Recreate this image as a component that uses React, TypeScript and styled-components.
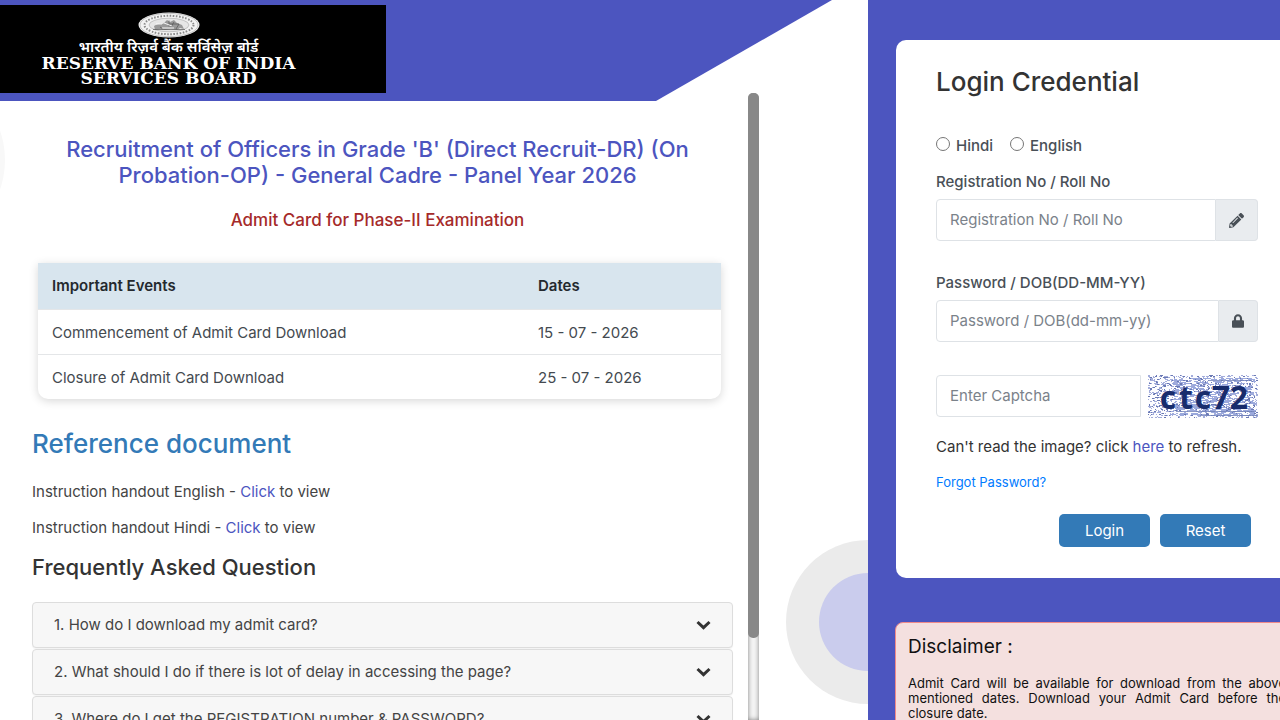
import React from "react";
import styled, { createGlobalStyle } from "styled-components";
import { FaLock, FaPencilAlt } from "react-icons/fa";

const GlobalStyle = createGlobalStyle`
  *, *::before, *::after { box-sizing: border-box; }
  body {
    margin: 0;
    background: #fff;
    color: #333;
    font-family: Inter, "Liberation Sans", sans-serif;
    font-size: 15px;
    line-height: 24px;
  }
  h1, h2, h3, p { margin: 0; font-weight: 500; }
  p { font-weight: 400; }
  a { text-decoration: none; }
`;

const brand = "#4c55bf";

const Page = styled.div`
  display: flex;
  height: 100vh;
  overflow: hidden;
`;

const InfoPanel = styled.main`
  position: relative;
  flex: 1;
  min-width: 0;
  display: flex;
  flex-direction: column;
  padding-top: 5px;
  overflow: hidden;
`;

const HeaderShape = styled.div`
  position: absolute;
  inset: 0 0 auto 0;
  height: 101px;
  background: ${brand};
  clip-path: polygon(0 0, 832px 0, 656px 100%, 0 100%);
`;

const Circle = styled.div<{ $size: number; $color: string }>`
  position: absolute;
  width: ${(p) => p.$size}px;
  height: ${(p) => p.$size}px;
  border-radius: 50%;
  background: ${(p) => p.$color};
`;

const LeftCircle = styled(Circle)`
  top: 70px;
  left: -175px;
`;

const RingCircle = styled(Circle)`
  top: 540px;
  right: -82px;
  display: grid;
  place-items: center;
`;

const InnerCircle = styled(Circle)`
  position: static;
`;

const Logo = styled.header`
  position: relative;
  width: 386px;
  height: 88px;
  flex: none;
  padding: 7px 49px 0 0;
  background: #000;
  color: #fff;
  display: flex;
  flex-direction: column;
  align-items: center;
  white-space: nowrap;
`;

const LogoHindi = styled.div`
  margin: 1px 0 -3px;
  font: 600 15px/20px "Noto Sans Devanagari", "Noto Sans", sans-serif;
`;

const LogoEnglish = styled.div`
  font: 700 17px/15px "DejaVu Serif", "Liberation Serif", serif;
  text-align: center;
`;

const ScrollArea = styled.div`
  position: relative;
  flex: 1;
  min-height: 0;
  width: 759px;
  max-width: 100%;
  display: flex;
`;

const ScrollContent = styled.div`
  flex: 1;
  min-width: 0;
  padding: 43px 15px 0 32px;
  overflow: hidden;
`;

const ScrollTrack = styled.div`
  width: 11px;
  background: #f5f5f5;
  box-shadow: inset 0 0 5px #808080;
  border-radius: 5px 5px 0 0;
`;

const ScrollThumb = styled.div`
  height: 87%;
  background: #888;
  border-radius: 5px;
`;

const Title = styled.h1`
  padding: 0 30px 0 20px;
  font-size: 22px;
  line-height: 26px;
  color: ${brand};
  text-align: center;
`;

const Subtitle = styled.h2`
  margin-top: 20px;
  padding-right: 10px;
  font-size: 17px;
  line-height: 24px;
  color: #a52a2a;
  text-align: center;
`;

const TableCard = styled.div`
  margin: 31px 12px 0 6px;
  border-radius: 0 0 10px 10px;
  box-shadow: 0 2px 10px rgba(0, 0, 0, 0.16);
  overflow: hidden;
`;

const Table = styled.table`
  width: 100%;
  table-layout: fixed;
  border-collapse: collapse;
  text-align: left;
  color: #444a50;
  thead { background: #d8e5ee; color: #24292e; }
  th { font-weight: 600; height: 46px; padding: 0 14px; }
  th:first-child { width: 486px; }
  td { height: 45px; padding: 2px 14px 0; border-top: 1px solid #e4e6e8; }
`;

const DocHeading = styled.h2`
  margin-top: 29px;
  font-size: 26px;
  line-height: 32px;
  color: #337ab7;
`;

const Handout = styled.p`
  margin-top: 12px;
  color: #444;
  ${DocHeading} + & { margin-top: 20px; }
`;

const BrandLink = styled.a`
  color: ${brand};
`;

const FaqHeading = styled.h2`
  margin: 13px 0 21px;
  font-size: 22px;
  line-height: 28px;
`;

const FaqItem = styled.button`
  display: flex;
  align-items: center;
  justify-content: space-between;
  width: 100%;
  height: 46px;
  margin-bottom: 1px;
  padding: 0 21px;
  border: 1px solid #ddd;
  border-radius: 4px;
  background: #f7f7f7;
  color: #444;
  font: inherit;
  text-align: left;
  box-shadow: 0 1px 1px rgba(0, 0, 0, 0.05);
`;

const LoginPanel = styled.aside`
  flex: none;
  width: 412px;
  padding: 40px 0 0 28px;
  background: ${brand};
  overflow: hidden;
`;

const LoginCard = styled.form`
  width: 402px;
  padding: 26px 40px 31px;
  border-radius: 10px;
  background: #fff;
`;

const LoginHeading = styled.h2`
  font-size: 26px;
  line-height: 32px;
`;

const RadioRow = styled.div`
  display: flex;
  gap: 17px;
  margin-top: 36px;
`;

const RadioLabel = styled.label`
  display: flex;
  gap: 6px;
  color: #495057;
  font-weight: 500;
  input { width: 14px; height: 14px; margin: 3px 0 0; }
`;

const Field = styled.div`
  margin-bottom: 30px;
`;

const Label = styled.label`
  display: block;
  margin: 12px 0 5px;
  color: #495057;
  font-weight: 500;
`;

const InputGroup = styled.div`
  display: flex;
  height: 42px;
`;

const TextInput = styled.input`
  flex: 1;
  min-width: 0;
  height: 42px;
  padding: 0 13px 2px;
  border: 1px solid #dee2e6;
  border-radius: 4px 0 0 4px;
  background: #fff;
  color: #495057;
  font: inherit;
  &::placeholder { color: #7b828a; opacity: 1; }
`;

const Addon = styled.span`
  display: flex;
  align-items: center;
  padding: 0 13px;
  border: 1px solid #dee2e6;
  border-left: 0;
  border-radius: 0 4px 4px 0;
  background: #e9ecef;
  color: #495057;
`;

const LockIcon = styled(FaLock)`
  width: 12px;
  height: 14px;
`;

const CaptchaRow = styled.div`
  display: flex;
  gap: 7px;
  height: 42px;
  margin: 33px 0 18px;
`;

const CaptchaImage = styled.svg`
  flex: none;
  width: 110px;
  height: 43px;
`;

const ForgotLink = styled.a`
  display: block;
  margin: 11px 0 20px;
  font-size: 13px;
  color: #007bff;
`;

const Buttons = styled.div`
  display: flex;
  justify-content: flex-end;
  gap: 10px;
  padding-right: 7px;
`;

const ActionButton = styled.button`
  width: 91px;
  height: 33px;
  border: 0;
  border-radius: 5px;
  background: #337ab7;
  color: #fff;
  font: inherit;
`;

const Disclaimer = styled.section`
  width: 404px;
  margin: 44px 0 0 -1px;
  padding: 10px 12px 24px;
  border: 1px solid #f08a8a;
  border-radius: 8px;
  background: #f4e0df;
  color: #111;
`;

const DisclaimerHeading = styled.h3`
  font-size: 19px;
  line-height: 28px;
  font-weight: 400;
`;

const DisclaimerText = styled.p`
  margin-top: 15px;
  font-size: 13px;
  line-height: 15px;
  text-align: justify;
`;

const Chevron = () => (
  <svg width="15" height="10" viewBox="0 0 15 10" aria-hidden="true">
    <path d="M1.500 2 L7.500 7.600 L13.500 2" fill="none" stroke="#333" strokeWidth="3" />
  </svg>
);

const Emblem = () => (
  <svg width="62" height="26" viewBox="0 0 62 26" aria-hidden="true">
    <ellipse cx="31" cy="13" rx="30.5" ry="12.5" fill="#f2f2f2" />
    <ellipse cx="31" cy="13" rx="29" ry="11.6" fill="none" stroke="#999" strokeWidth=".5" />
    <ellipse cx="31" cy="13" rx="24.5" ry="9.2" fill="none" stroke="#8a8a8a" strokeWidth="2" strokeDasharray="1.6 1.5" />
    <ellipse cx="31" cy="13" rx="20" ry="6.8" fill="#e6e6e6" stroke="#999" strokeWidth=".5" />
    <path d="M16 14 q4-3 9-2 l4-4 3 2 4-2 3 3 5 2 2 4 -4-1 -3 2 -6-1 -6 1 -5-1 -5 1z" fill="#999" />
    <path d="M15 17.500 h32 M22 15 l3 2 M31 8.500 v6 M36 10 l-3 5 M41 12 l-3 5 M31 12 h10" stroke="#555" strokeWidth=".7" fill="none" />
    <path d="M26 11 l8 3 M18 12 h6 M24 16 h12" stroke="#fff" strokeWidth=".9" />
  </svg>
);

// Deterministic speckle so the captcha background stays the same between renders.
function speckle(seed: number, count: number, wide: boolean): string {
  let s = seed;
  const next = () => {
    s = (s * 1103515245 + 12345) % 2147483648;
    return s / 2147483648;
  };
  let d = "";
  for (let i = 0; i < count; i++) {
    const x = wide ? 22 + Math.floor(next() * 82) : Math.floor(next() * 109);
    const y = wide ? 3 + Math.floor(next() * 38) : Math.floor(next() * 43);
    const w = wide ? 2 + Math.floor(next() * 5) : 1 + Math.floor(next() * 2);
    d += `M${x} ${y}h${w}v1h-${w}z`;
  }
  return d;
}

const captchaGlyphs: [string, number][] = [
  ["c", 20],
  ["t", 38],
  ["c", 55],
  ["7", 73],
  ["2", 91],
];

const Captcha = () => (
  <CaptchaImage viewBox="0 0 110 43" role="img" aria-label="Captcha">
    <rect width="110" height="43" fill="#fdfdff" />
    <path d={speckle(7, 1000, false)} fill="#a3addb" />
    <path d={speckle(91, 380, true)} fill="#9aa8dc" />
    <path d={speckle(23, 330, false)} fill="#6a79b4" />
    <path d="M28 36.500 H108 M52 40.500 H110 M60 5.500 H104" stroke="#7080b8" strokeWidth=".8" />
    {captchaGlyphs.map(([glyph, x]) => (
      <text
        key={x}
        x={x}
        y="34"
        textAnchor="middle"
        fontFamily="Open Sans, sans-serif"
        fontWeight="700"
        fontSize="32"
        fill="#182c6c"
      >
        {glyph}
      </text>
    ))}
  </CaptchaImage>
);

const events = [
  ["Commencement of Admit Card Download", "15 - 07 - 2026"],
  ["Closure of Admit Card Download", "25 - 07 - 2026"],
];

const questions = [
  "1. How do I download my admit card?",
  "2. What should I do if there is lot of delay in accessing the page?",
  "3. Where do I get the REGISTRATION number & PASSWORD?",
];

export default function App() {
  return (
    <Page>
      <GlobalStyle />
      <InfoPanel>
        <HeaderShape />
        <LeftCircle $size={180} $color="#f8f8f8" />
        <RingCircle $size={164} $color="#ebebeb">
          <InnerCircle $size={98} $color="#cacced" />
        </RingCircle>
        <Logo>
          <Emblem />
          <LogoHindi lang="hi">भारतीय रिज़र्व बैंक सर्विसेज़ बोर्ड</LogoHindi>
          <LogoEnglish>
            RESERVE BANK OF INDIA
            <br />
            SERVICES BOARD
          </LogoEnglish>
        </Logo>
        <ScrollArea>
          <ScrollContent>
            <Title>
              Recruitment of Officers in Grade 'B' (Direct Recruit-DR) (On Probation-OP) - General Cadre - Panel Year
              2026
            </Title>
            <Subtitle>Admit Card for Phase-II Examination</Subtitle>
            <TableCard>
              <Table>
                <thead>
                  <tr>
                    <th>Important Events</th>
                    <th>Dates</th>
                  </tr>
                </thead>
                <tbody>
                  {events.map(([name, date]) => (
                    <tr key={name}>
                      <td>{name}</td>
                      <td>{date}</td>
                    </tr>
                  ))}
                </tbody>
              </Table>
            </TableCard>
            <DocHeading>Reference document</DocHeading>
            <Handout>
              Instruction handout English - <BrandLink href="#english">Click</BrandLink> to view
            </Handout>
            <Handout>
              Instruction handout Hindi - <BrandLink href="#hindi">Click</BrandLink> to view
            </Handout>
            <FaqHeading>Frequently Asked Question</FaqHeading>
            {questions.map((q) => (
              <FaqItem key={q} type="button" aria-expanded={false}>
                {q}
                <Chevron />
              </FaqItem>
            ))}
          </ScrollContent>
          <ScrollTrack>
            <ScrollThumb />
          </ScrollTrack>
        </ScrollArea>
      </InfoPanel>
      <LoginPanel>
        <LoginCard onSubmit={(e) => e.preventDefault()}>
          <LoginHeading>Login Credential</LoginHeading>
          <RadioRow>
            <RadioLabel>
              <input type="radio" name="language" value="hi" />
              Hindi
            </RadioLabel>
            <RadioLabel>
              <input type="radio" name="language" value="en" />
              English
            </RadioLabel>
          </RadioRow>
          <Field>
            <Label htmlFor="reg">Registration No / Roll No</Label>
            <InputGroup>
              <TextInput id="reg" type="text" placeholder="Registration No / Roll No" />
              <Addon>
                <FaPencilAlt size={15} />
              </Addon>
            </InputGroup>
          </Field>
          <Field>
            <Label htmlFor="pwd">Password / DOB(DD-MM-YY)</Label>
            <InputGroup>
              <TextInput id="pwd" type="password" placeholder="Password / DOB(dd-mm-yy)" />
              <Addon>
                <LockIcon />
              </Addon>
            </InputGroup>
          </Field>
          <CaptchaRow>
            <TextInput type="text" placeholder="Enter Captcha" aria-label="Enter Captcha" />
            <Captcha />
          </CaptchaRow>
          <p>
            Can't read the image? click <BrandLink href="#refresh">here</BrandLink> to refresh.
          </p>
          <ForgotLink href="#forgot">Forgot Password?</ForgotLink>
          <Buttons>
            <ActionButton type="submit">Login</ActionButton>
            <ActionButton type="reset">Reset</ActionButton>
          </Buttons>
        </LoginCard>
        <Disclaimer>
          <DisclaimerHeading>Disclaimer :</DisclaimerHeading>
          <DisclaimerText>
            Admit Card will be available for download from the above mentioned dates. Download your Admit Card before
            the closure date.
          </DisclaimerText>
        </Disclaimer>
      </LoginPanel>
    </Page>
  );
}
